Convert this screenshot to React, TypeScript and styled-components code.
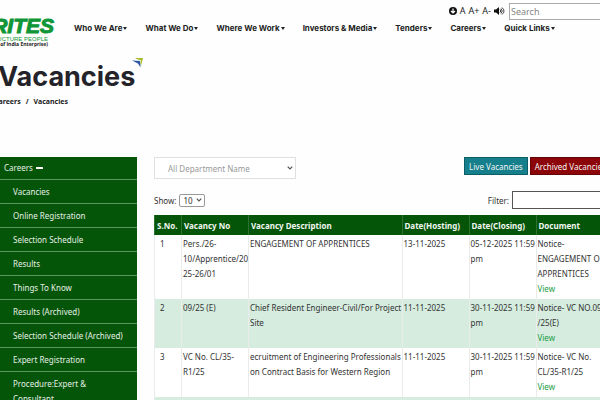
import React from "react";
import styled, { createGlobalStyle } from "styled-components";

const GREEN = "#055509";

const GlobalStyle = createGlobalStyle`
  * { box-sizing: border-box; }
  body {
    margin: 0;
    background: #fefefe;
    color: #333;
    font-family: "Noto Sans", "Open Sans", sans-serif;
    font-size: 8px;
    overflow: hidden;
  }
`;

const Page = styled.div`
  height: 100vh;
  overflow: hidden;
`;

const Header = styled.header`
  display: flex;
  height: 58px;
`;

const Logo = styled.a`
  display: flex;
  flex-direction: column;
  align-items: flex-end;
  justify-content: flex-start;
  flex: none;
  width: 56px;
  padding-top: 16px;
  color: #0f9636;
  text-decoration: none;
  white-space: nowrap;
`;

const LogoName = styled.span`
  margin-right: 2px;
  font: italic 700 21px/20px "Liberation Sans", sans-serif;
  -webkit-text-stroke: 1px #0f9636;
`;

const LogoTag = styled.span`
  margin-right: 8px;
  font: 400 6px/6px "Liberation Sans", sans-serif;
`;

const LogoNote = styled.span`
  margin-right: 8px;
  color: #222;
  font: 700 5px/5px "Open Sans", sans-serif;
`;

const HeaderMain = styled.div`
  flex: 1;
  min-width: 0;
  padding-left: 18px;
`;

const Tools = styled.div`
  display: flex;
  justify-content: flex-end;
  align-items: flex-start;
  gap: 3px;
  height: 22px;
  padding-top: 3px;
`;

const ToolButton = styled.button`
  display: flex;
  align-items: center;
  height: 15px;
  padding: 0;
  border: 0;
  background: none;
  color: #222;
  font: 400 9px/15px "Noto Sans", sans-serif;
`;

const Search = styled.input`
  width: 96px;
  height: 17px;
  margin: 0 -5px 0 1px;
  padding: 0 1px;
  border: 1px solid #aaa;
  background: #fff;
  font: 400 9px "Noto Sans", sans-serif;
  &::placeholder { color: #858585; }
`;

const Nav = styled.nav`
  display: flex;
  gap: 18px;
`;

const NavLink = styled.a`
  display: flex;
  align-items: center;
  color: #222;
  font: 700 8px/12px Inter, sans-serif;
  text-decoration: none;
  white-space: nowrap;
  &::after {
    content: "";
    border: 2px solid transparent;
    border-top: 3px solid #222;
    border-bottom: 0;
    margin-left: 1px;
  }
`;

const TitleArea = styled.section`
  height: 99px;
`;

const TitleRow = styled.div`
  display: flex;
  align-items: flex-start;
  height: 38px;
`;

const Title = styled.h1`
  margin: 0 0 0 -2px;
  color: #24232a;
  font: 700 27px/38px Inter, sans-serif;
`;

const TitleMark = styled.svg`
  width: 12px;
  height: 10px;
  margin-left: -3px;
`;

const Crumbs = styled.div`
  display: flex;
  gap: 5px;
  margin-left: -6px;
  color: #222;
  font: 700 7px/12px "Noto Sans", sans-serif;
`;

const CrumbLink = styled.a`
  color: inherit;
  text-decoration: none;
`;

const Body = styled.div`
  display: flex;
  align-items: flex-start;
  gap: 17px;
`;

const Sidebar = styled.nav`
  flex: none;
  width: 137px;
  background: ${GREEN};
`;

const SideLink = styled.a<{ $top?: boolean }>`
  display: flex;
  align-items: center;
  gap: 3px;
  min-height: ${(p) => (p.$top ? 23 : 24)}px;
  padding: ${(p) => (p.$top ? "3px 12px 4px 4px" : "4px 12px 4px 13px")};
  border-bottom: 1px solid #5d935f;
  color: #e6efe6;
  font-size: 8px;
  line-height: 15px;
  text-decoration: none;
`;

const Main = styled.main`
  flex: 1;
  min-width: 0;
  margin-right: -8px;
`;

const FilterRow = styled.div`
  display: flex;
  justify-content: space-between;
  align-items: flex-start;
  height: 34px;
`;

const Chevron = styled.svg`
  position: absolute;
  right: 3px;
  top: 50%;
  width: 6px;
  height: 4px;
  margin-top: -2px;
  pointer-events: none;
`;

const SelectWrap = styled.div<{ $wide?: boolean }>`
  position: relative;
  width: ${(p) => (p.$wide ? 142 : 26)}px;
`;

const Select = styled.select<{ $wide?: boolean }>`
  display: block;
  appearance: none;
  width: 100%;
  height: ${(p) => (p.$wide ? 22 : 13)}px;
  padding: 0 ${(p) => (p.$wide ? 13 : 3)}px;
  border: 1px solid ${(p) => (p.$wide ? "#e0e0e0" : "#999")};
  border-radius: ${(p) => (p.$wide ? 0 : 2)}px;
  background: #fff;
  color: ${(p) => (p.$wide ? "#999" : "#333")};
  font: 400 8px "Noto Sans", sans-serif;
`;

const Actions = styled.div`
  display: flex;
  gap: 2px;
  margin-right: -3px;
`;

const Action = styled.button<{ $color: string; $edge: string }>`
  height: 18px;
  padding: 0 4px;
  border: 1px solid ${(p) => p.$edge};
  background: ${(p) => p.$color};
  color: #f4f4f4;
  font: 400 8px "Noto Sans", sans-serif;
  white-space: nowrap;
`;

const Controls = styled.div`
  display: flex;
  justify-content: space-between;
  align-items: flex-start;
  height: 24px;
`;

const Field = styled.label`
  display: flex;
  align-items: center;
  gap: 3px;
  height: 18px;
`;

const FilterInput = styled.input`
  width: 96px;
  height: 18px;
  border: 1px solid #555;
  background: #fff;
`;

const Table = styled.table`
  width: 100%;
  table-layout: fixed;
  border-collapse: collapse;
  line-height: 15px;
`;

const Col = styled.col<{ $w?: number }>`
  width: ${(p) => (p.$w ? `${p.$w}px` : "auto")};
`;

const Th = styled.th`
  height: 20px;
  padding: 0 2px;
  border-left: 1px solid #2e7231;
  background: ${GREEN};
  color: #f2f7f2;
  font-weight: 700;
  text-align: left;
  white-space: nowrap;
`;

const Tr = styled.tr<{ $shade: boolean }>`
  background: ${(p) => (p.$shade ? "#d5ecdf" : "#fff")};
`;

const Td = styled.td<{ $first?: boolean }>`
  padding: 1px 0 3px ${(p) => (p.$first ? 5 : 1)}px;
  border-left: 1px solid #e9ecea;
  vertical-align: top;
  white-space: pre;
`;

const ViewLink = styled.a`
  display: block;
  color: #1a9b43;
  text-decoration: none;
`;

const menu = ["Who We Are", "What We Do", "Where We Work", "Investors & Media", "Tenders", "Careers", "Quick Links"];

const side = [
  "Vacancies", "Online Registration", "Selection Schedule", "Results", "Things To Know",
  "Results (Archived)", "Selection Schedule (Archived)", "Expert Registration", "Procedure:Expert & Consultant",
];

const rows = [
  { no: "Pers./26-\n10/Apprentice/20\n25-26/01", desc: "ENGAGEMENT OF APPRENTICES", host: "13-11-2025", close: "05-12-2025 11:59\npm", doc: "Notice-\nENGAGEMENT OF\nAPPRENTICES" },
  { no: "09/25 (E)", desc: "Chief Resident Engineer-Civil/For Project\nSite", host: "11-11-2025", close: "30-11-2025 11:59\npm", doc: "Notice- VC NO.09\n/25(E)" },
  { no: "VC No. CL/35-\nR1/25", desc: "ecruitment of Engineering Professionals\non Contract Basis for Western Region", host: "11-11-2025", close: "30-11-2025 11:59\npm", doc: "Notice- VC No.\nCL/35-R1/25" },
];

const Arrow = () => (
  <Chevron viewBox="0 0 6 4">
    <path d="M.7.7 3 3 5.3.7" fill="none" stroke="#555" strokeWidth="1.2" />
  </Chevron>
);

export default function App() {
  return (
    <Page>
      <GlobalStyle />
      <Header>
        <Logo href="#">
          <LogoName>RITES</LogoName>
          <LogoTag>INFRASTRUCTURE PEOPLE</LogoTag>
          <LogoNote>(A Govt. of India Enterprise)</LogoNote>
        </Logo>
        <HeaderMain>
          <Tools>
            <ToolButton aria-label="Skip to content">
              <svg width="8" height="8" viewBox="0 0 16 16">
                <circle cx="8" cy="8" r="8" fill="#111" />
                <path d="M8 3v9M4 8l4 4 4-4" fill="none" stroke="#fff" strokeWidth="2.4" />
              </svg>
            </ToolButton>
            <ToolButton>A</ToolButton>
            <ToolButton>A+</ToolButton>
            <ToolButton>A-</ToolButton>
            <ToolButton aria-label="Screen reader">
              <svg width="11" height="8" viewBox="0 0 22 16">
                <path d="M0 5h4l6-5v16l-6-5H0z" fill="#111" />
                <path d="M12 5q3 3 0 6M14 3q5 5 0 10M16 1q8 7 0 14" fill="none" stroke="#111" strokeWidth="1.6" />
              </svg>
            </ToolButton>
            <Search type="text" placeholder="Search" aria-label="Search" />
          </Tools>
          <Nav>
            {menu.map((m) => <NavLink href="#" key={m}>{m}</NavLink>)}
          </Nav>
        </HeaderMain>
      </Header>
      <TitleArea>
        <TitleRow>
          <Title>Vacancies</Title>
          <TitleMark viewBox="0 0 24 20">
            <path d="M6 0h16l-4 16-3-11z" fill="#a3bd2c" />
            <path d="M0 5l16 1 1 13-5-8z" fill="#2d55a5" />
            <path d="M8 3l9 1 1 8-3-7z" fill="#fff" />
          </TitleMark>
        </TitleRow>
        <Crumbs>
          <CrumbLink href="#">Careers</CrumbLink>
          <span>/</span>
          <span>Vacancies</span>
        </Crumbs>
      </TitleArea>
      <Body>
        <Sidebar>
          <SideLink href="#" $top>
            Careers
            <svg width="7" height="2" viewBox="0 0 7 2"><rect width="7" height="2" rx=".5" fill="#fff" /></svg>
          </SideLink>
          {side.map((s) => <SideLink href="#" key={s}>{s}</SideLink>)}
        </Sidebar>
        <Main>
          <FilterRow>
            <SelectWrap $wide>
              <Select $wide aria-label="Department">
                <option>All Department Name</option>
              </Select>
              <Arrow />
            </SelectWrap>
            <Actions>
              <Action $color="#15808c" $edge="#0b5d68">Live Vacancies</Action>
              <Action $color="#8c0508" $edge="#650306">Archived Vacancies</Action>
            </Actions>
          </FilterRow>
          <Controls>
            <Field>
              Show:
              <SelectWrap>
                <Select><option>10</option></Select>
                <Arrow />
              </SelectWrap>
            </Field>
            <Field>
              Filter:
              <FilterInput type="text" />
            </Field>
          </Controls>
          <Table>
            <colgroup>
              <Col $w={27} />
              <Col $w={67} />
              <Col />
              <Col $w={67} />
              <Col $w={67} />
              <Col $w={72} />
            </colgroup>
            <thead>
              <tr>
                {["S.No.", "Vacancy No", "Vacancy Description", "Date(Hosting)", "Date(Closing)", "Document"].map((h) => (
                  <Th key={h} scope="col">{h}</Th>
                ))}
              </tr>
            </thead>
            <tbody>
              {rows.map((r, i) => (
                <Tr key={r.no} $shade={i % 2 === 1}>
                  <Td $first>{i + 1}</Td>
                  <Td>{r.no}</Td>
                  <Td>{r.desc}</Td>
                  <Td>{r.host}</Td>
                  <Td>{r.close}</Td>
                  <Td>{r.doc}<ViewLink href="#">View</ViewLink></Td>
                </Tr>
              ))}
              <Tr $shade><Td colSpan={6} /></Tr>
            </tbody>
          </Table>
        </Main>
      </Body>
    </Page>
  );
}
